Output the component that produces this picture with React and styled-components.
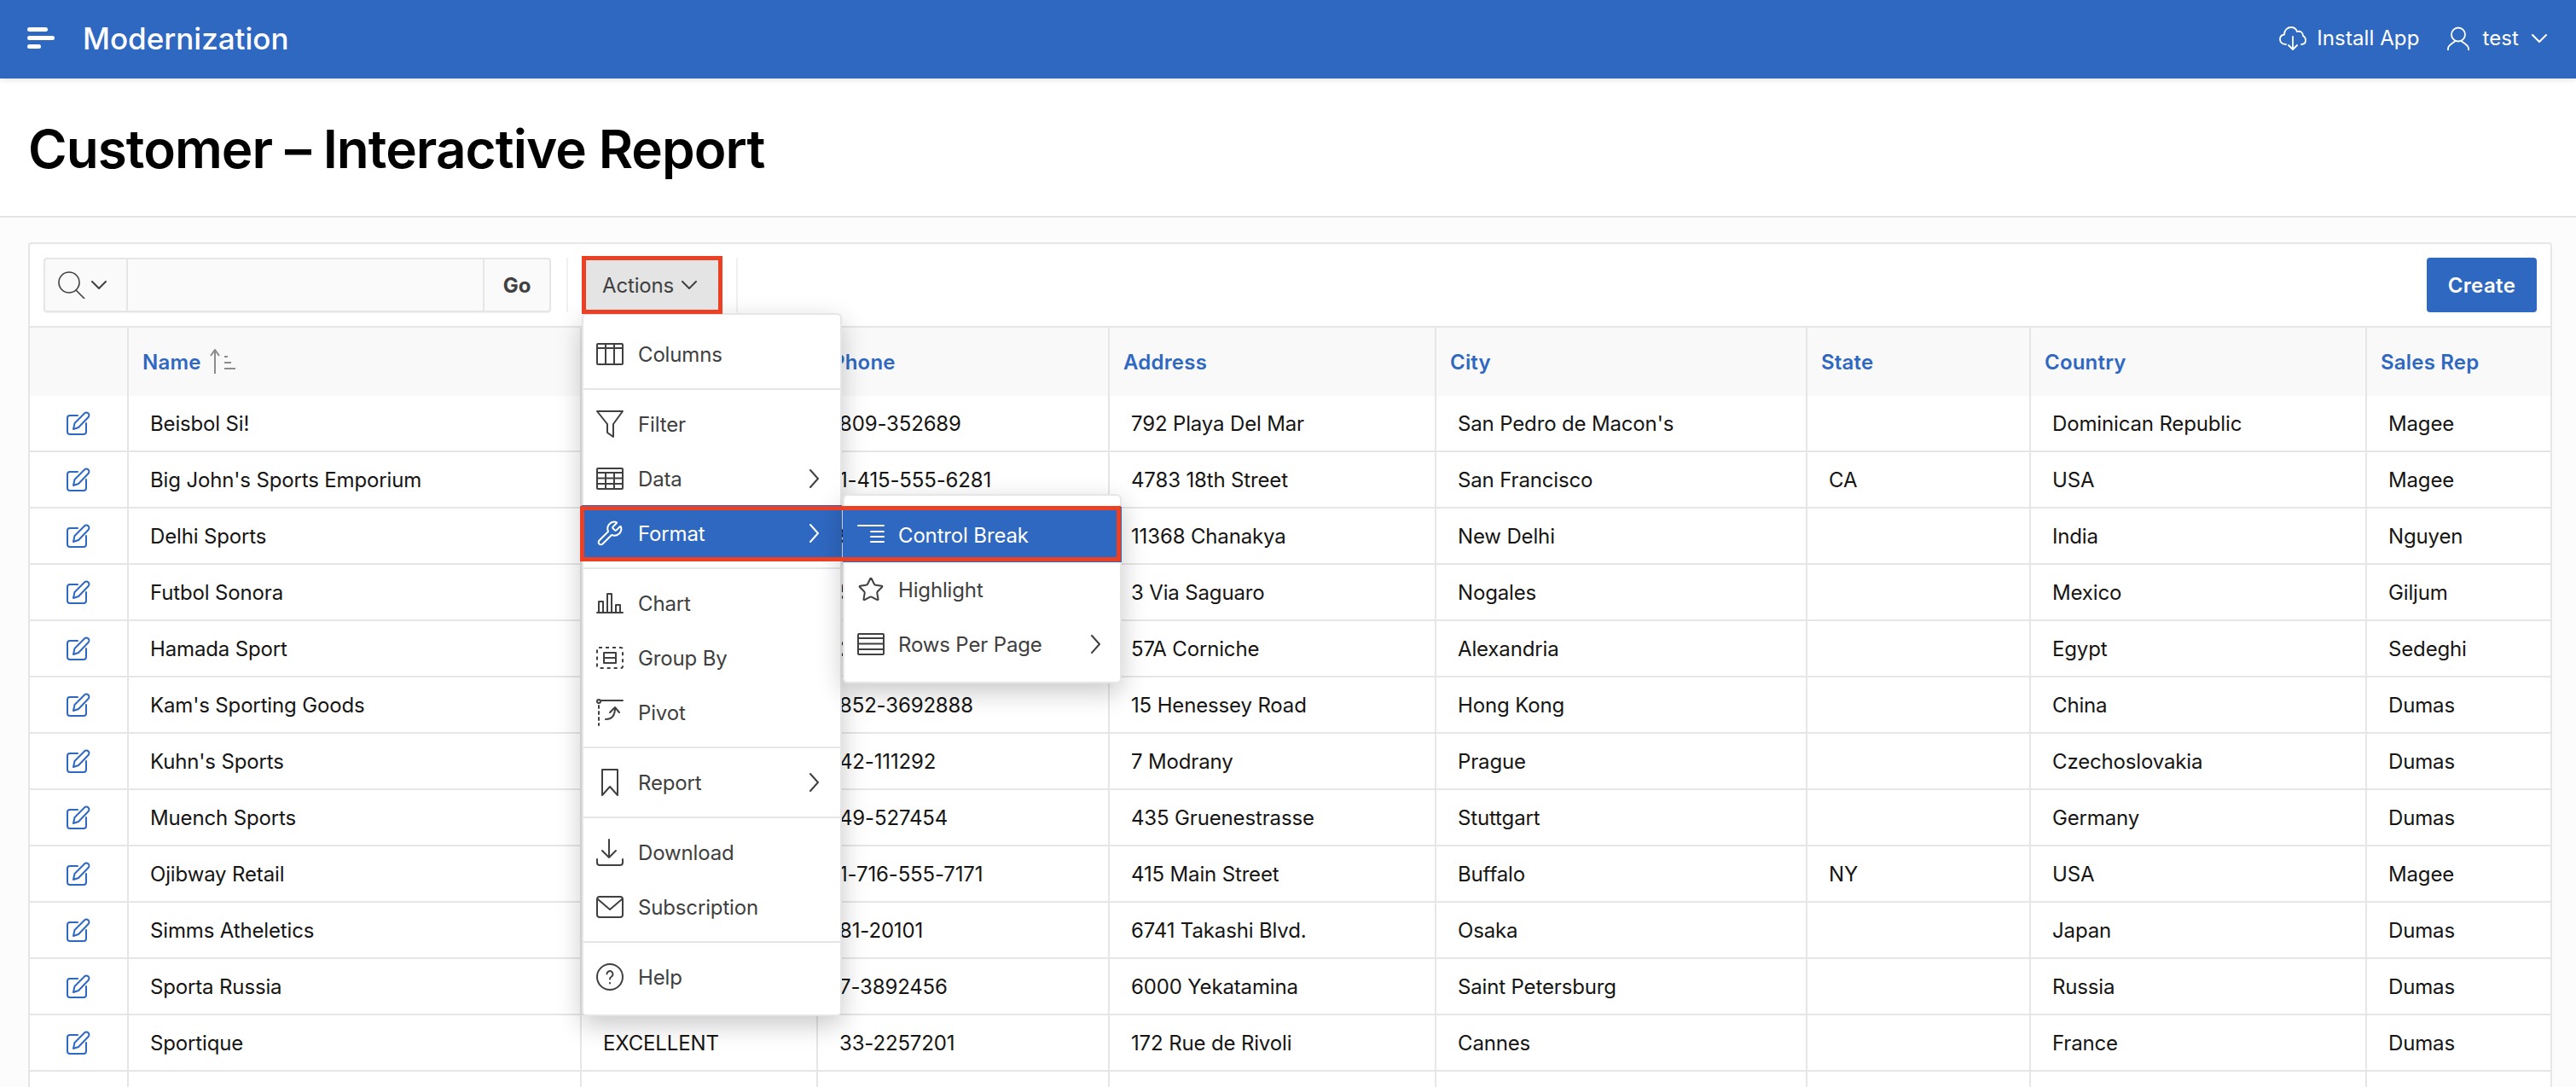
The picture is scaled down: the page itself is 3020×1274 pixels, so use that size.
import React from 'react';
import styled, { createGlobalStyle } from 'styled-components';
import { Wrench, Star } from 'lucide-react';

const BLUE = '#2f68c1';
const LINE = '#e6e6e6';
const RED = '#eb4024';

const GlobalStyle = createGlobalStyle`
  html, body {
    margin: 0;
    height: 1274px;
    overflow: hidden;
    background: #fcfcfc;
    font-family: Inter, "Noto Sans", sans-serif;
    letter-spacing: -0.15px;
    color: #161513;
  }
`;

const Header = styled.header`
  height: 92px;
  box-sizing: border-box;
  background: ${BLUE};
  box-shadow: 0 2px 6px rgba(0, 0, 0, 0.1);
  display: flex;
  align-items: center;
  padding: 0 34px 3px 32px;
  color: #fff;
  position: relative;
`;

const Burger = styled.div`
  width: 32px;
  display: flex;
  flex-direction: column;
  gap: 5px;
  margin-right: 33px;
`;

const BurgerBar = styled.span`
  display: block;
  height: 5px;
  border-radius: 3px;
  background: #fff;
  width: ${(p) => p.$w}px;
`;

const Brand = styled.div`
  font-size: 35px;
  font-weight: 500;
  letter-spacing: 0;
  margin-right: auto;
`;

const HeaderLink = styled.div`
  display: flex;
  align-items: center;
  gap: ${(p) => p.$gap}px;
  font-size: 24px;
  letter-spacing: 0.1px;
  margin-left: ${(p) => p.$ml || 0}px;
`;

const PageHead = styled.div`
  height: 161px;
  background: #fff;
  border-bottom: 2px solid ${LINE};
  display: flex;
  align-items: center;
  padding-left: 33px;
`;

const Title = styled.h1`
  margin: 3px 0 0;
  font-size: 62px;
  font-weight: 600;
  letter-spacing: -0.95px;
  color: #000;
`;

const Body = styled.main`
  padding: 29px 28px 0 33px;
`;

const Region = styled.section`
  background: #fff;
  border: 2px solid ${LINE};
  border-radius: 4px 4px 0 0;
`;

const Toolbar = styled.div`
  display: flex;
  align-items: center;
  height: 96px;
  padding: 0 16px;
  border-bottom: 2px solid ${LINE};
`;

const SearchGroup = styled.div`
  display: flex;
  width: 595px;
  height: 64px;
  box-sizing: border-box;
  border: 2px solid ${LINE};
  border-radius: 4px;
  background: #fafafa;
  box-shadow: 0 1px 2px rgba(0, 0, 0, 0.06);
`;

const SearchPick = styled.div`
  width: 97px;
  flex: none;
  display: flex;
  align-items: center;
  padding-left: 15px;
  box-sizing: border-box;
  gap: 7px;
  color: #404040;
  border-right: 2px solid ${LINE};
`;

const SearchInput = styled.div`
  flex: 1;
`;

const GoButton = styled.div`
  width: 78px;
  flex: none;
  box-sizing: border-box;
  display: flex;
  align-items: center;
  justify-content: center;
  font-size: 24px;
  font-weight: 700;
  color: #404040;
  border-left: 2px solid ${LINE};
`;

const ToolSep = styled.div`
  width: 2px;
  height: 64px;
  background: #f0f0f0;
  margin: ${(p) => p.$m};
`;

const ActionsWrap = styled.div`
  position: relative;
`;

const ActionsButton = styled.div`
  width: 165px;
  height: 68px;
  box-sizing: border-box;
  border: 5px solid ${RED};
  padding-left: 19px;
  background: #e4e4e4;
  color: #404040;
  font-size: 24px;
  display: flex;
  align-items: center;
  gap: 9px;
  position: relative;
  z-index: 5;
`;

const CreateButton = styled.div`
  margin-left: auto;
  width: 129px;
  height: 64px;
  border-radius: 4px;
  background: ${BLUE};
  color: #fff;
  font-size: 24px;
  font-weight: 600;
  letter-spacing: 0.4px;
  display: flex;
  align-items: center;
  justify-content: center;
`;

const Table = styled.table`
  border-collapse: separate;
  border-spacing: 0;
  table-layout: fixed;
  width: 2955px;
`;

const Th = styled.th`
  height: 80px;
  padding: 0 0 0 16px;
  background: #f9f9f9;
  border-right: ${(p) => (p.$last ? 'none' : `2px solid ${LINE}`)};
  text-align: left;
  color: ${BLUE};
  font-size: 24px;
  font-weight: 600;
  letter-spacing: 0.2px;
`;

const SortHead = styled.span`
  display: flex;
  align-items: center;
  gap: 10px;
`;

const Td = styled.td`
  height: 64px;
  padding: 0 0 0 25px;
  border-right: ${(p) => (p.$last ? 'none' : `2px solid ${LINE}`)};
  border-bottom: 2px solid ${LINE};
  font-size: 24px;
  white-space: nowrap;
  overflow: hidden;
`;

const EditCell = styled(Td)`
  padding: 0;
  text-align: center;
  color: ${BLUE};
  svg {
    display: block;
    margin: 0 auto;
  }
`;

const Menu = styled.div`
  position: absolute;
  z-index: 4;
  box-sizing: border-box;
  background: #fff;
  border: 2px solid ${LINE};
  border-radius: 6px;
  box-shadow: 0 10px 30px rgba(0, 0, 0, 0.22);
  padding: 14px 0 12px;
  color: #404040;
  font-size: 24px;
`;

const MainMenu = styled(Menu)`
  top: calc(100% - 1px);
  left: 0;
  width: 305px;
`;

const SubMenu = styled(Menu)`
  top: -14px;
  left: calc(100% + 1px);
  width: 327px;
  z-index: 5;
`;

const Item = styled.div`
  position: relative;
  height: 64px;
  margin: 0 -2px;
  padding: 0 ${(p) => (p.$sub ? 25 : 27)}px 0 17px;
  display: flex;
  align-items: center;
  gap: ${(p) => (p.$sub ? 16 : 17)}px;
  ${(p) => p.$active && `
    background: ${BLUE};
    color: #fff;
    box-shadow: 0 -1px 0 ${BLUE};
  `}
  svg {
    flex: none;
  }
`;

const ItemArrow = styled.span`
  margin-left: auto;
  display: flex;
`;

const MenuSep = styled.div`
  height: 2px;
  background: ${LINE};
  margin: 8px -2px;
`;

const RedBox = styled.div`
  position: absolute;
  left: -2px;
  top: 0;
  width: 634px;
  height: 65px;
  box-sizing: border-box;
  border: 5px solid ${RED};
  z-index: 6;
  pointer-events: none;
`;

const Icon = ({ children, w = 32, h = 32, vb, sw = 2 }) => (
  <svg
    width={w}
    height={h}
    viewBox={vb || `0 0 ${w} ${h}`}
    fill="none"
    stroke="currentColor"
    strokeWidth={sw}
    strokeLinecap="round"
    strokeLinejoin="round"
  >
    {children}
  </svg>
);

const Chevron = ({ w = 18, h = 10 }) => (
  <Icon w={w} h={h} vb="0 0 18 10">
    <path d="M1 1l8 8 8-8" />
  </Icon>
);

const ChevronRight = () => (
  <Icon w={11} h={22}>
    <path d="M1 1l9 10-9 10" />
  </Icon>
);

const ColumnsIcon = () => (
  <Icon>
    <rect x="1" y="4" width="30" height="24" rx="1" />
    <path d="M1 9h30M11 4v24M21 4v24" />
  </Icon>
);
const FilterIcon = () => (
  <Icon>
    <path d="M1 1h30L20 16v15l-7-5V16z" />
  </Icon>
);
const DataIcon = () => (
  <Icon>
    <rect x="1" y="4" width="30" height="24" rx="1" />
    <path d="M1 9h30M1 15.500h30M1 22h30M11 9v19M21 9v19" />
  </Icon>
);
const ChartIcon = () => (
  <Icon>
    <path d="M1 27h30M3 27V14h5v13M13 27V5h5v22M23 27v-9h5v9" />
  </Icon>
);
const GroupIcon = () => (
  <Icon>
    <rect x="1" y="4" width="30" height="24" rx="2" strokeDasharray="4 4" strokeLinecap="butt" />
    <rect x="9" y="10" width="14" height="12" />
    <path d="M9 16h14" />
  </Icon>
);
const PivotIcon = () => (
  <Icon>
    <circle cx="3" cy="3" r="2" />
    <path d="M3 8v3M3 15v3M3 22v3M3 29v2M6 2h25" />
    <path d="M11 24c7 0 11-4 11-13M16 16l6-6 5 6" />
  </Icon>
);
const BookmarkIcon = () => (
  <Icon>
    <path d="M7 1h18v30l-9-10-9 10z" />
  </Icon>
);
const DownloadIcon = () => (
  <Icon>
    <path d="M15 1v21M7 14l8 8 8-8M1 24v4a3 3 0 0 0 3 3h24a3 3 0 0 0 3-3v-4" />
  </Icon>
);
const MailIcon = () => (
  <Icon>
    <rect x="1" y="4" width="30" height="24" rx="3" />
    <path d="M2 7l14 12L30 7" />
  </Icon>
);
const HelpIcon = () => (
  <Icon>
    <circle cx="16" cy="16" r="15" />
    <path d="M12.500 12.500a3.500 3.500 0 1 1 5.500 3c-1.300.8-2 1.500-2 3M16 23v.5" />
  </Icon>
);
const BreakIcon = () => (
  <Icon>
    <path d="M1 5h30M16 12h15M16 18h15M16 24h15" />
  </Icon>
);
const RowsIcon = () => (
  <Icon>
    <rect x="1" y="4" width="30" height="24" rx="1" />
    <path d="M1 9h30M1 15.500h30M1 22h30" />
  </Icon>
);
const EditIcon = () => (
  <Icon w={28} h={28}>
    <path d="M13 5H4a3 3 0 0 0-3 3v16a3 3 0 0 0 3 3h16a3 3 0 0 0 3-3V14" />
    <path d="M8 21l1.500-7L21 2.500a3 3 0 0 1 4.500 4.500L14 19z" />
  </Icon>
);
const SortIcon = () => (
  <svg width="30" height="30" viewBox="0 0 30 30" fill="none" stroke="#8c8c8c" strokeWidth="2">
    <path d="M6 29V1M1 8l5-7 5 7M17 9h4M17 16h8M17 23h13" />
  </svg>
);
const SearchIcon = () => (
  <Icon sw={1.600}>
    <circle cx="13" cy="13" r="12" />
    <path d="M21 22l10 10" />
  </Icon>
);
const CloudIcon = () => (
  <Icon w={32} h={30} sw={1.800}>
    <path d="M8 22C3 22 1 19 1 16c0-3 2-5 5-5.500C6 5 10 2 14 2c4 0 6 2 7 5 4-1 7 1 7 5 2 1 3 3 3 5 0 3-2 5-5 5" />
    <path d="M16 13v15M11 23l5 5 5-5" />
  </Icon>
);
const UserIcon = () => (
  <Icon w={26} h={28} sw={1.800}>
    <circle cx="13" cy="9.500" r="8" />
    <path d="M1 28v-2c0-4 5-6 8-8.500M25 28v-2c0-4-5-6-8-8.500" />
  </Icon>
);

const columns = [
  { title: '', width: 116 },
  { title: 'Name', width: 531 },
  { title: 'Credit Rating', width: 277 },
  { title: 'Phone', width: 342 },
  { title: 'Address', width: 383 },
  { title: 'City', width: 435 },
  { title: 'State', width: 262 },
  { title: 'Country', width: 394 },
  { title: 'Sales Rep', width: 215 },
];

const rows = [
  ['Beisbol Si!', 'EXCELLENT', '809-352689', '792 Playa Del Mar', "San Pedro de Macon's", '', 'Dominican Republic', 'Magee'],
  ["Big John's Sports Emporium", 'EXCELLENT', '1-415-555-6281', '4783 18th Street', 'San Francisco', 'CA', 'USA', 'Magee'],
  ['Delhi Sports', 'GOOD', '91-10351', '11368 Chanakya', 'New Delhi', '', 'India', 'Nguyen'],
  ['Futbol Sonora', 'EXCELLENT', '52-404562', '3 Via Saguaro', 'Nogales', '', 'Mexico', 'Giljum'],
  ['Hamada Sport', 'EXCELLENT', '20-1209211', '57A Corniche', 'Alexandria', '', 'Egypt', 'Sedeghi'],
  ["Kam's Sporting Goods", 'EXCELLENT', '852-3692888', '15 Henessey Road', 'Hong Kong', '', 'China', 'Dumas'],
  ["Kuhn's Sports", 'EXCELLENT', '42-111292', '7 Modrany', 'Prague', '', 'Czechoslovakia', 'Dumas'],
  ['Muench Sports', 'GOOD', '49-527454', '435 Gruenestrasse', 'Stuttgart', '', 'Germany', 'Dumas'],
  ['Ojibway Retail', 'POOR', '1-716-555-7171', '415 Main Street', 'Buffalo', 'NY', 'USA', 'Magee'],
  ['Simms Atheletics', 'POOR', '81-20101', '6741 Takashi Blvd.', 'Osaka', '', 'Japan', 'Dumas'],
  ['Sporta Russia', 'POOR', '7-3892456', '6000 Yekatamina', 'Saint Petersburg', '', 'Russia', 'Dumas'],
  ['Sportique', 'EXCELLENT', '33-2257201', '172 Rue de Rivoli', 'Cannes', '', 'France', 'Dumas'],
  ['Sweet Rock Sports', 'GOOD', '234-6036201', '6 Saint Antoine', 'Lagos', '', 'Nigeria', 'Dumas'],
];

const App = () => {
  return (
    <>
      <GlobalStyle />
      <Header>
        <Burger>
          <BurgerBar $w={24} />
          <BurgerBar $w={32} />
          <BurgerBar $w={16} />
        </Burger>
        <Brand>Modernization</Brand>
        <HeaderLink $gap={12}>
          <CloudIcon />
          Install App
        </HeaderLink>
        <HeaderLink $gap={15} $ml={33}>
          <UserIcon />
          test
          <Chevron />
        </HeaderLink>
      </Header>

      <PageHead>
        <Title>Customer – Interactive Report</Title>
      </PageHead>

      <Body>
        <Region>
          <Toolbar>
            <SearchGroup>
              <SearchPick>
                <SearchIcon />
                <Chevron />
              </SearchPick>
              <SearchInput />
              <GoButton>Go</GoButton>
            </SearchGroup>
            <ToolSep $m="0 16px 0 18px" />
            <ActionsWrap>
              <ActionsButton>
                Actions
                <Chevron />
              </ActionsButton>
              <MainMenu>
                <Item><ColumnsIcon />Columns</Item>
                <MenuSep />
                <Item><FilterIcon />Filter</Item>
                <Item><DataIcon />Data<ItemArrow><ChevronRight /></ItemArrow></Item>
                <Item $active>
                  <Wrench size={32} strokeWidth={1.5} />
                  Format
                  <ItemArrow><ChevronRight /></ItemArrow>
                  <SubMenu>
                    <Item $sub $active><BreakIcon />Control Break</Item>
                    <Item $sub><Star size={32} strokeWidth={1.5} />Highlight</Item>
                    <Item $sub><RowsIcon />Rows Per Page<ItemArrow><ChevronRight /></ItemArrow></Item>
                  </SubMenu>
                  <RedBox />
                </Item>
                <MenuSep />
                <Item><ChartIcon />Chart</Item>
                <Item><GroupIcon />Group By</Item>
                <Item><PivotIcon />Pivot</Item>
                <MenuSep />
                <Item><BookmarkIcon />Report<ItemArrow><ChevronRight /></ItemArrow></Item>
                <MenuSep />
                <Item><DownloadIcon />Download</Item>
                <Item><MailIcon />Subscription</Item>
                <MenuSep />
                <Item><HelpIcon />Help</Item>
              </MainMenu>
            </ActionsWrap>
            <ToolSep $m="0 0 0 16px" />
            <CreateButton>Create</CreateButton>
          </Toolbar>

          <Table>
            <colgroup>
              {columns.map((c, i) => (
                <col key={i} width={c.width} />
              ))}
            </colgroup>
            <thead>
              <tr>
                {columns.map((c, i) => (
                  <Th key={i} $last={i === columns.length - 1}>
                    {c.title === 'Name' ? (
                      <SortHead>
                        {c.title}
                        <SortIcon />
                      </SortHead>
                    ) : (
                      c.title
                    )}
                  </Th>
                ))}
              </tr>
            </thead>
            <tbody>
              {rows.map((row, r) => (
                <tr key={r}>
                  <EditCell>
                    <EditIcon />
                  </EditCell>
                  {row.map((v, i) => (
                    <Td key={i} $last={i === row.length - 1}>
                      {v}
                    </Td>
                  ))}
                </tr>
              ))}
            </tbody>
          </Table>
        </Region>
      </Body>
    </>
  );
};

export default App;
